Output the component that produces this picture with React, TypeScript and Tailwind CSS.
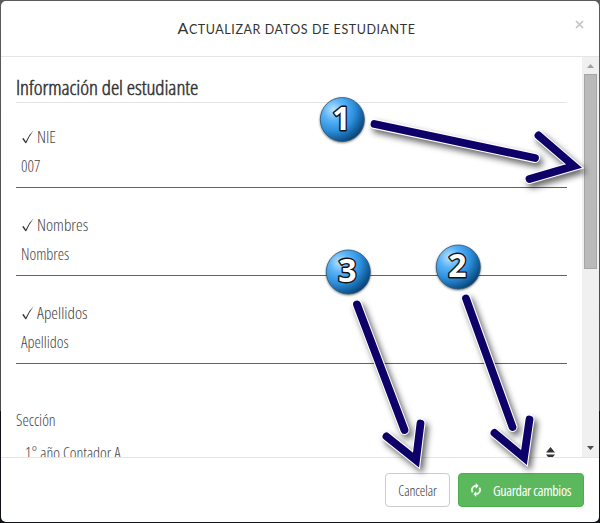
import React from "react";

const condensed =
  "font-['Open_Sans',sans-serif] font-light [font-stretch:75%] whitespace-nowrap";

function Field({ label, value }: { label: string; value: string }) {
  return (
    <div className="h-[88px]">
      <div className="flex h-[63px] flex-col border-b border-[#4d5ea5] pl-[5px]">
        <div className="flex h-6 items-center text-[#444]">
          <svg className="ml-px h-[14px] w-[12px] shrink-0" viewBox="0 0 12 14" fill="none">
            <path d="M.2 8.8 1.6 7.9 3.8 11.4Q6.8 4.5 11.6 .2 7.2 6.5 4.2 13.2H3.5Z" fill="#333" />
          </svg>
          <span className={`${condensed} ml-[3px] text-[17px] leading-6 text-[#444]`}>{label}</span>
        </div>
        <span className={`${condensed} mt-[5px] text-[16px] leading-6 text-[#444]`}>{value}</span>
      </div>
    </div>
  );
}

function Arrow({ shaft, head }: { shaft: string; head: string }) {
  return (
    <g fill="none" strokeLinecap="round" strokeMiterlimit="10" filter="url(#shadow)">
      <path d={shaft} stroke="#fff" strokeWidth="10" />
      <path d={head} stroke="#fff" strokeWidth="10" />
      <path d={shaft} stroke="#0d0068" strokeWidth="7.8" />
      <path d={head} stroke="#0d0068" strokeWidth="7.8" />
    </g>
  );
}

function Marker({ x, y, n }: { x: number; y: number; n: string }) {
  return (
    <g>
      <circle cx={x} cy={y} r="22" fill="url(#ball)" stroke="#31556f" strokeWidth=".8" filter="url(#ballShadow)" />
      <text
        x={x - 1}
        y={y + 10}
        textAnchor="middle"
        className="font-['Open_Sans',sans-serif] text-[32px] font-bold"
        fill="#fff"
        stroke="#111"
        strokeWidth="2.8"
        strokeLinejoin="round"
        paintOrder="stroke"
      >
        {n}
      </text>
    </g>
  );
}

export default function App() {
  return (
    <div className="relative h-[523px] w-[600px] overflow-hidden bg-[linear-gradient(#5b5a5d_0px,#48484a_411px,#101116_411px)] p-px">
      <div className="flex h-[521px] w-[598px] flex-col overflow-hidden rounded-[5px] bg-white">
        <header className="relative flex h-[56px] shrink-0 items-center justify-center border-b border-[#e5e5e5]">
          <h4 className="block whitespace-nowrap pb-[2px] pr-[7px] font-['Lato',sans-serif] text-[12.5px] uppercase tracking-[0.57px] text-[#333] first-letter:text-[16px]">
            Actualizar datos de estudiante
          </h4>
          <svg className="absolute right-[15px] top-[19px] h-[9px] w-[9px]" viewBox="0 0 9 9" stroke="#c4c4c4" strokeWidth="1.7">
            <path d="M1 1 8 8M8 1 1 8" />
          </svg>
        </header>

        <main className="flex h-[400px] shrink-0 overflow-hidden">
          <div className="min-w-0 flex-1 pl-[15px] pr-[15px] pt-[15px]">
            <h3 className={`${condensed} h-[31px] border-b border-[#e5e5e5] text-[21px] leading-[30px] tracking-[-0.06px] text-[#333] [-webkit-text-stroke:0.5px_#333]`}>
              Información del estudiante
            </h3>
            <div className="pt-[22px]">
              <Field label="NIE" value="007" />
              <Field label="Nombres" value="Nombres" />
              <Field label="Apellidos" value="Apellidos" />
            </div>
            <div className={`${condensed} mt-[19px] text-[16px] leading-6 text-[#444]`}>Sección</div>
            <div className="mt-[9px] flex justify-between pl-[9px] pr-[12px]">
              <span className={`${condensed} text-[16px] leading-6 text-[#444]`}>1° año Contador A</span>
              <svg className="mt-[6px] h-[13px] w-[9px]" viewBox="0 0 9 13" fill="#333">
                <path d="M0 5.5 4.5 0 9 5.5ZM0 7.5H9L4.5 13Z" />
              </svg>
            </div>
          </div>
          <div className="flex w-[17px] shrink-0 flex-col items-center bg-[#f0f0f0]">
            <svg className="h-[17px] w-[17px] shrink-0" viewBox="0 0 17 17" fill="#a0a0a0">
              <path d="M5 11 8.5 7 12 11Z" />
            </svg>
            <div className="h-[195px] w-[13px] shrink-0 border border-[#a6a6a6] bg-[#bababa]" />
            <svg className="mt-auto h-[17px] w-[17px] shrink-0" viewBox="0 0 17 17" fill="#505050">
              <path d="M5 6 8.5 10 12 6Z" />
            </svg>
          </div>
        </main>

        <footer className="flex flex-1 justify-end gap-2 border-t border-[#e5e5e5] pr-[15px] pt-[15px]">
          <button className={`${condensed} flex h-[34px] w-[65px] items-center justify-center rounded border border-[#ccc] bg-white text-[14px] tracking-[-0.1px] text-[#333]`}>
            Cancelar
          </button>
          <button className={`${condensed} flex h-[34px] w-[126px] items-center rounded border border-[#4cae4c] bg-[#5cb85c] pl-[10px] text-[14px] text-white`}>
            <svg className="h-[14px] w-[14px] shrink-0" viewBox="0 0 24 24" fill="#fff" stroke="#fff" strokeWidth=".9">
              <path d="M12 6v3l4-4-4-4v3c-4.42 0-8 3.58-8 8 0 1.57.46 3.03 1.24 4.26L6.7 14.8A5.87 5.87 0 0 1 6 12c0-3.31 2.69-6 6-6zm6.76 1.74L17.3 9.2c.44.84.7 1.79.7 2.8 0 3.31-2.69 6-6 6v-3l-4 4 4 4v-3c4.42 0 8-3.58 8-8 0-1.57-.46-3.03-1.24-4.26z" />
            </svg>
            <span className="ml-[10px] font-normal tracking-[-0.32px]">Guardar cambios</span>
          </button>
        </footer>
      </div>

      <svg className="pointer-events-none absolute left-0 top-0 h-[523px] w-[600px]" viewBox="0 0 600 523">
        <defs>
          <radialGradient id="ball" cx=".3" cy=".28" r=".8">
            <stop offset="0" stopColor="#b9e2ff" />
            <stop offset=".3" stopColor="#58b2f8" />
            <stop offset=".6" stopColor="#2d8fdc" />
            <stop offset=".8" stopColor="#1767a8" />
            <stop offset="1" stopColor="#064070" />
          </radialGradient>
          <filter id="shadow" filterUnits="userSpaceOnUse" x="0" y="0" width="600" height="523" colorInterpolationFilters="sRGB">
            <feDropShadow dx="3" dy="4" stdDeviation="3" floodOpacity=".6" />
          </filter>
          <filter id="ballShadow" x="-20%" y="-20%" width="140%" height="140%" colorInterpolationFilters="sRGB">
            <feDropShadow dx="0" dy="1" stdDeviation=".8" floodOpacity=".5" />
          </filter>
        </defs>
        <Arrow shaft="M374.5 124 535 158" head="M538.5 135.5 574 166 529.5 179" />
        <Arrow shaft="M357 304.5 404.5 430" head="M386.5 436.5 416 460 420.5 423.5" />
        <Arrow shaft="M466 298.5 512.5 427" head="M494.5 433 524 457.5 529.5 419.5" />
        <Marker x={342.3} y={119.5} n="1" />
        <Marker x={458.3} y={267} n="2" />
        <Marker x={348.3} y={272} n="3" />
      </svg>
    </div>
  );
}
